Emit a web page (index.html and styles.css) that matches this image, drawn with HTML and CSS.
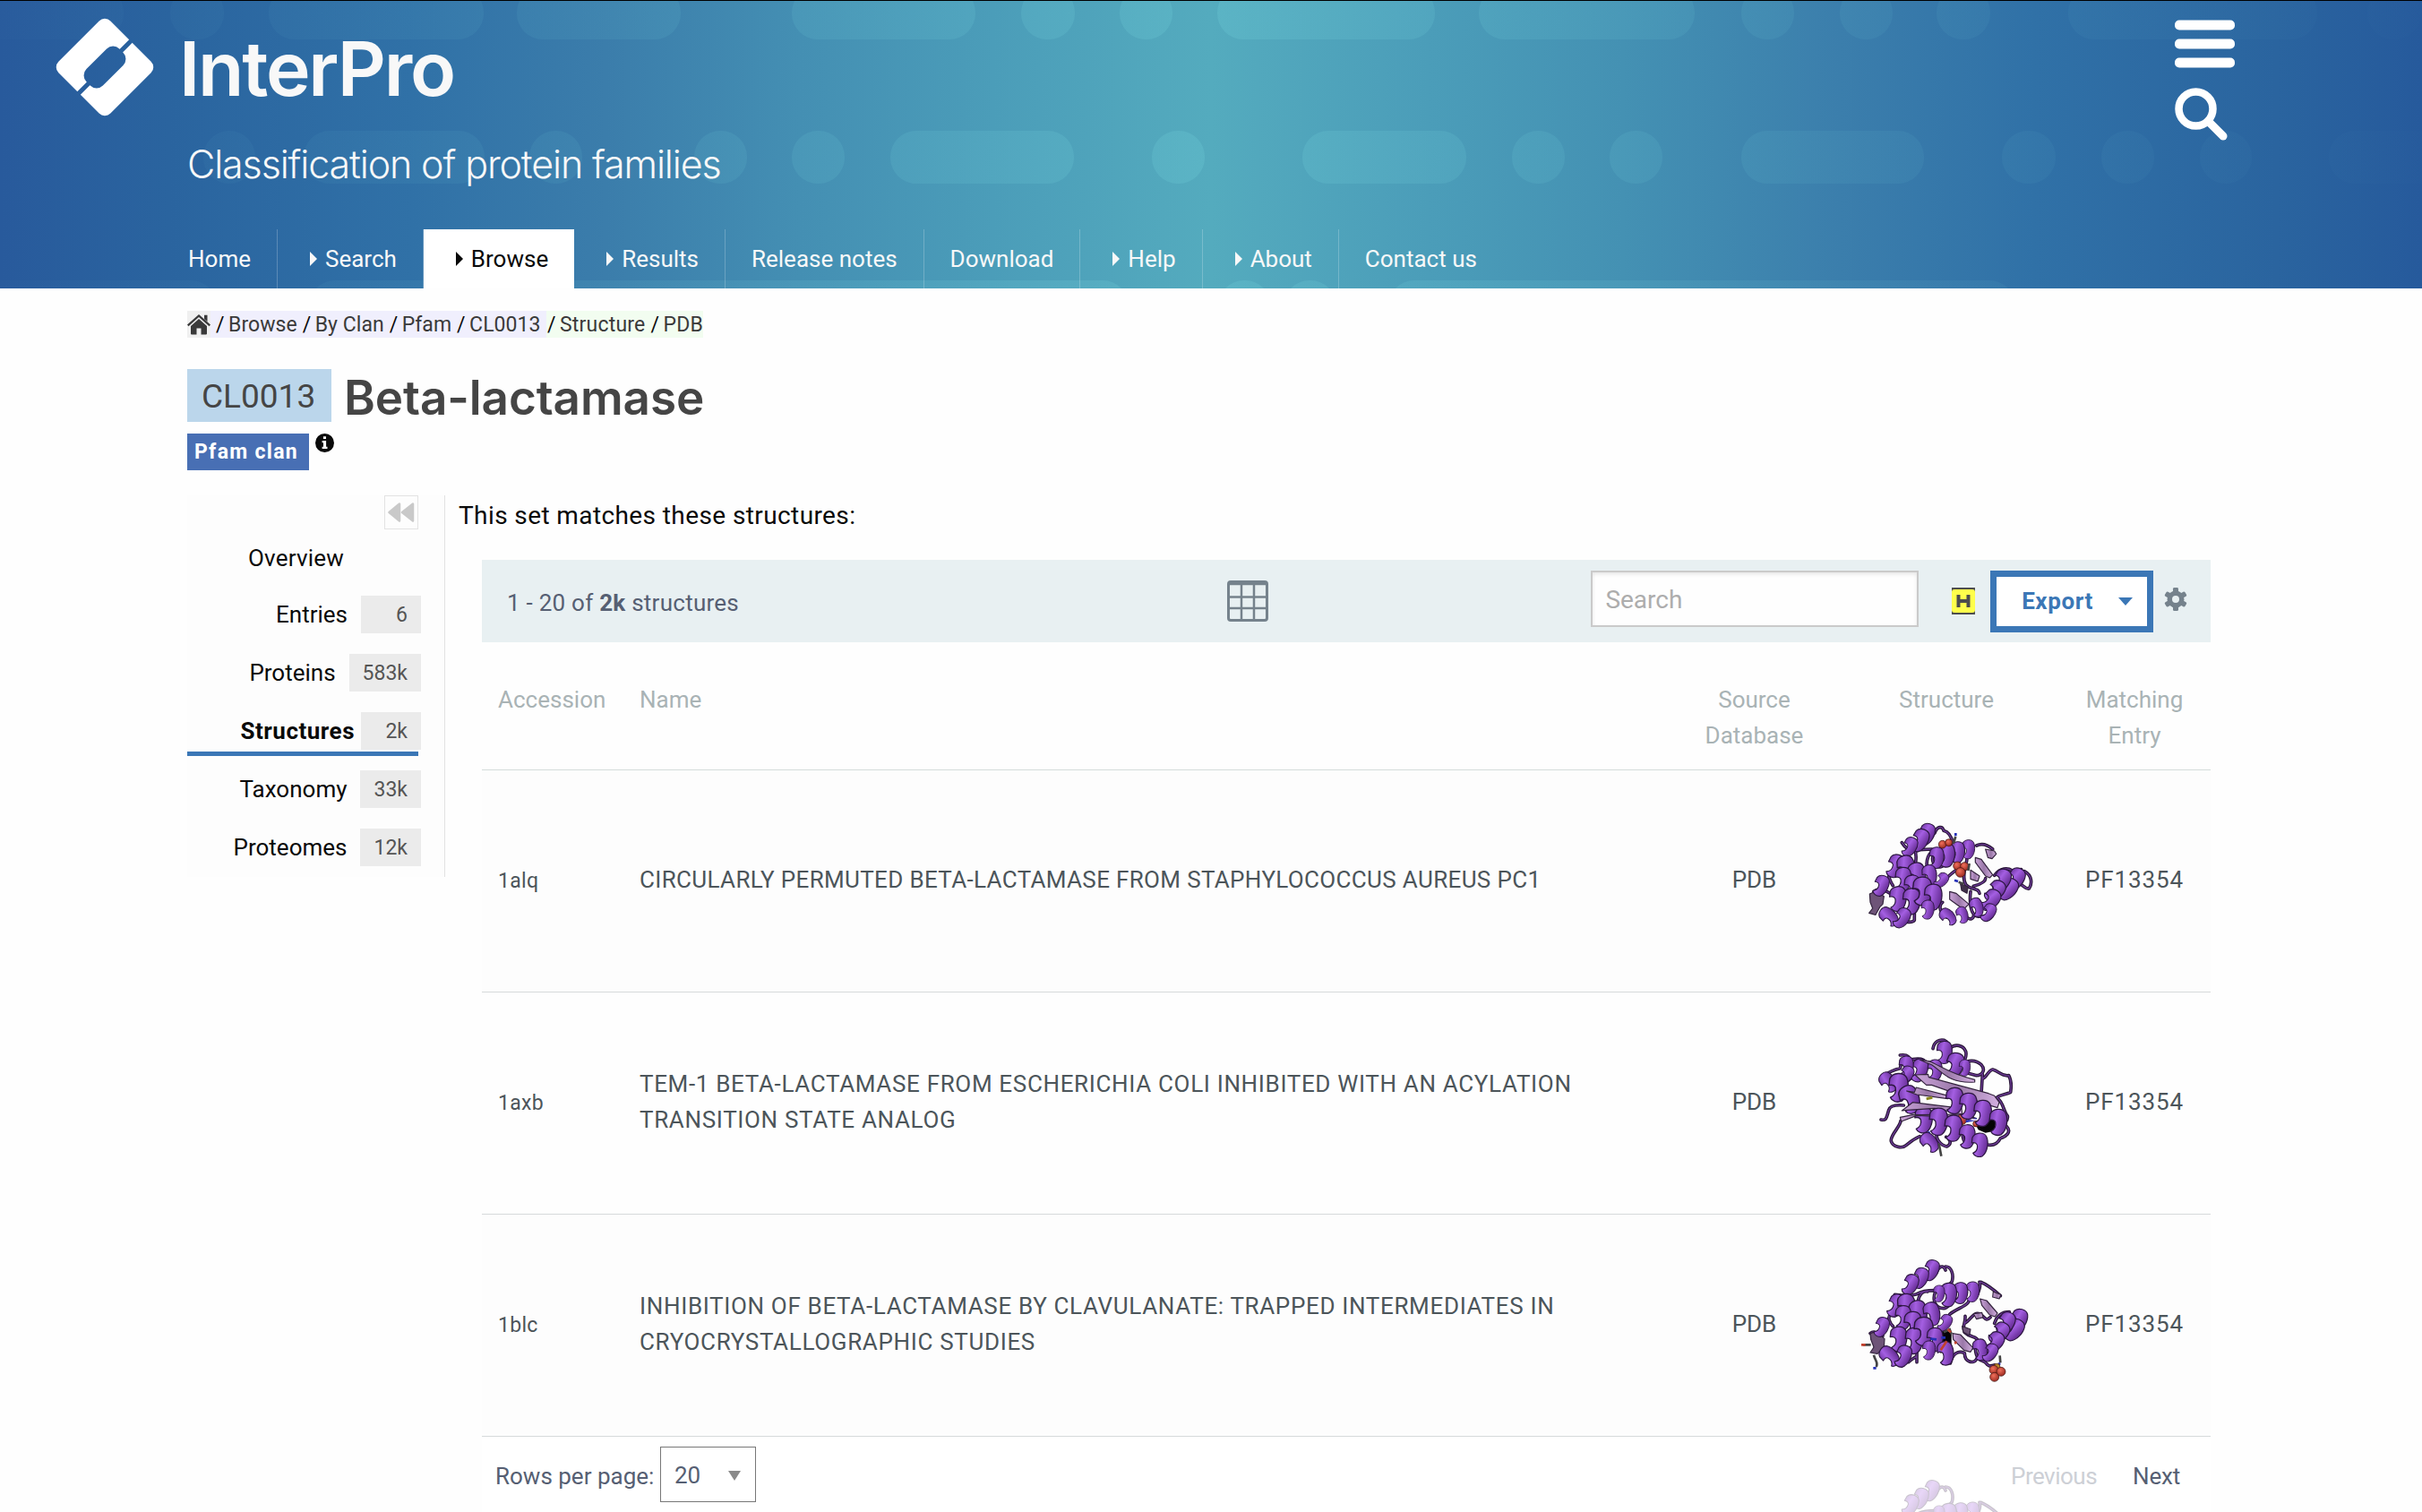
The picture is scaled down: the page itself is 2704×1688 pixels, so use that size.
FILE: index.html
```html
<!DOCTYPE html>
<html lang="en">
<head>
<meta charset="utf-8">
<title>Beta-lactamase (CL0013) - Structures - InterPro</title>
<link rel="stylesheet" href="styles.css">
</head>
<body>
<svg class="defs" width="0" height="0" aria-hidden="true">
  <defs>
    <linearGradient id="coil" x1="0" y1="0" x2="1" y2="0.3">
      <stop offset="0" stop-color="#6d35a0"/><stop offset=".45" stop-color="#a45fe2"/><stop offset="1" stop-color="#6a309a"/>
    </linearGradient>
    <radialGradient id="atom" cx=".4" cy=".35" r=".7">
      <stop offset="0" stop-color="#f0705c"/><stop offset="1" stop-color="#96261c"/>
    </radialGradient>
    <linearGradient id="sheet" x1="0" y1="0" x2="1" y2="0">
      <stop offset="0" stop-color="#c9a3d8"/><stop offset=".5" stop-color="#9a78a8"/><stop offset="1" stop-color="#d3b0e0"/>
    </linearGradient>
    <path id="turn" d="M-24-24C-16-42 14-44 23-28C32-8 27 24 10 38C-4 44-18 38-22 28C-8 22-6 10-8 0C-12-8-18-8-26-6Z"/>

    <g id="fold-a">
      <path id="a-loops" d="M300 208C308 184 326 184 330 200M330 200C346 204 356 222 360 240M232 262C240 276 238 290 236 306M190 240C206 266 226 272 250 264L290 262M276 330C268 300 280 270 300 268M300 270C284 296 296 322 318 322C336 320 330 300 350 300M340 358C360 340 380 322 400 316C412 308 404 290 412 276M400 330C398 350 394 366 404 380C420 400 448 390 450 410M430 386C450 380 470 372 470 360M152 340C140 350 150 368 160 384M162 286C180 286 190 290 204 292M96 404C110 390 140 402 150 410M232 474V500C224 510 210 506 200 504M326 440C310 452 320 480 340 490M420 404C416 440 420 480 440 486C462 492 486 480 494 466M410 492C420 500 430 494 430 484M500 350C520 324 544 324 560 334L590 330M600 336C628 350 626 380 616 394C604 396 596 384 586 378M440 250C460 240 480 250 494 262"/>
    </g>
  </defs>
</svg>

<header class="masthead">
  <svg class="bubbles" width="2704" height="321" viewBox="0 1 2704 321" aria-hidden="true">
    <defs>
      <linearGradient id="glow" gradientUnits="userSpaceOnUse" x1="0" y1="0" x2="2704" y2="0">
        <stop offset="0" stop-color="#5fa8c8" stop-opacity=".02"/>
        <stop offset=".25" stop-color="#60b8cc" stop-opacity=".14"/>
        <stop offset=".5" stop-color="#70cfd8" stop-opacity=".26"/>
        <stop offset=".75" stop-color="#60b8cc" stop-opacity=".13"/>
        <stop offset="1" stop-color="#5fa8c8" stop-opacity=".01"/>
      </linearGradient>
    </defs>
    <g fill="url(#glow)">
      <rect x="-60" y="-15" width="198" height="59" rx="29"/><rect x="190" y="-15" width="60" height="59" rx="29"/><rect x="300" y="-15" width="240" height="59" rx="29"/><rect x="577" y="-15" width="183" height="59" rx="29"/><rect x="884" y="-15" width="205" height="59" rx="29"/><rect x="1140" y="-15" width="60" height="59" rx="29"/><rect x="1250" y="-15" width="59" height="59" rx="29"/><rect x="1359" y="-15" width="243" height="59" rx="29"/><rect x="1651" y="-15" width="241" height="59" rx="29"/><rect x="1944" y="-15" width="59" height="59" rx="29"/><rect x="2054" y="-15" width="59" height="59" rx="29"/><rect x="2162" y="-15" width="60" height="59" rx="29"/><rect x="2309" y="-15" width="278" height="59" rx="29"/><rect x="2643" y="-15" width="60" height="59" rx="29"/>
      <rect x="227" y="146" width="58" height="59" rx="29"/><rect x="339" y="146" width="202" height="59" rx="29"/><rect x="591" y="146" width="59" height="59" rx="29"/><rect x="775" y="146" width="59" height="59" rx="29"/><rect x="884" y="146" width="59" height="59" rx="29"/><rect x="994" y="146" width="205" height="59" rx="29"/><rect x="1286" y="146" width="59" height="59" rx="29"/><rect x="1454" y="146" width="183" height="59" rx="29"/><rect x="1688" y="146" width="59" height="59" rx="29"/><rect x="1797" y="146" width="59" height="59" rx="29"/><rect x="1944" y="146" width="204" height="59" rx="29"/><rect x="2235" y="146" width="60" height="59" rx="29"/><rect x="2346" y="146" width="59" height="59" rx="29"/><rect x="2456" y="146" width="58" height="59" rx="29"/><rect x="2600" y="146" width="180" height="59" rx="29"/>
      <rect x="-40" y="313" width="282" height="59" rx="29"/><rect x="345" y="313" width="915" height="59" rx="29"/><rect x="1360" y="313" width="59" height="59" rx="29"/><rect x="1433" y="313" width="59" height="59" rx="29"/><rect x="1550" y="313" width="700" height="59" rx="29"/>
    </g>
  </svg>
  <div class="masthead-main">
    <div class="brand">
      <svg class="logo" width="110" height="110" viewBox="-55 -55 110 110">
        <defs><mask id="cut" maskUnits="userSpaceOnUse" x="-55" y="-55" width="110" height="110">
          <rect x="-55" y="-55" width="110" height="110" fill="#fff"/>
          <g transform="rotate(-45)" fill="#000">
            <rect x="-26" y="-13" width="52" height="26" rx="10"/>
            <rect x="-60" y="-2.5" width="120" height="5"/>
          </g>
        </mask></defs>
        <g mask="url(#cut)"><rect x="-41" y="-41" width="82" height="82" rx="9" transform="rotate(45)" fill="#fff"/></g>
      </svg>
      <span class="brand-name">InterPro</span>
    </div>
    <div class="tagline">Classification of protein families</div>
    <nav class="nav">
      <a>Home</a>
      <a><i class="caret"></i>Search</a>
      <a class="active"><i class="caret"></i>Browse</a>
      <a><i class="caret"></i>Results</a>
      <a>Release notes</a>
      <a>Download</a>
      <a><i class="caret"></i>Help</a>
      <a><i class="caret"></i>About</a>
      <a>Contact us</a>
    </nav>
  </div>
  <div class="tools">
    <svg width="67" height="54" viewBox="0 0 67 54" fill="#fff"><rect y=".5" width="67" height="11" rx="5"/><rect y="21.500" width="67" height="11" rx="5"/><rect y="42.500" width="67" height="11" rx="5"/></svg>
    <svg width="60" height="60" viewBox="0 0 60 60" fill="none" stroke="#fff"><circle cx="23.500" cy="23.500" r="19" stroke-width="8.500"/><path d="M38 38L54 54" stroke-width="9" stroke-linecap="round"/></svg>
  </div>
</header>

<main class="page">
  <nav class="crumbs">
    <span class="home"><svg width="26" height="23" viewBox="0 0 26 23" fill="#3a3a3a"><path d="M13 0L26 11.500L24.500 13.200L13 3L1.500 13.200L0 11.500L8.500 4ZM19 .8H22.500V8L19 5Z"/><path d="M13 5L22 13V21.500Q22 22.500 21 22.500H15.500V15.500H10.500V22.500H5Q4 22.500 4 21.500V13Z"/></svg></span>
    <span class="set"><b>/</b>Browse<b>/</b>By Clan<b>/</b>Pfam<b>/</b>CL0013</span>
    <span class="struct"><b>/</b>Structure<b>/</b>PDB</span>
  </nav>
  <div class="title">
    <span class="accession">CL0013</span>
    <h1>Beta-lactamase</h1>
  </div>
  <div class="tag-row">
    <span class="tag">Pfam clan</span>
    <svg width="21" height="21" viewBox="0 0 21 21"><circle cx="10.500" cy="10.500" r="10.500" fill="#0a0a0a"/><path d="M8.900 3.200H12V6.100H8.900ZM7.600 8H12.100V14.800H13.500V17H7.600V14.800H9V10.200H7.600Z" fill="#fff"/></svg>
  </div>

  <div class="content">
    <aside class="side">
      <div class="collapse"><svg width="30" height="22" viewBox="0 0 30 22" fill="#c9c9c9" stroke="#c9c9c9" stroke-width="2.500" stroke-linejoin="round"><path d="M13 1.500V20.500L1.500 11ZM28 1.500V20.500L16 11Z"/></svg></div>
      <a class="overview">Overview</a>
      <a>Entries<span>6</span></a>
      <a>Proteins<span>583k</span></a>
      <a class="current">Structures<span>2k</span></a>
      <a>Taxonomy<span>33k</span></a>
      <a>Proteomes<span>12k</span></a>
    </aside>

    <section class="results">
      <p class="lead">This set matches these structures:</p>
      <div class="table">
        <div class="toolbar">
          <div class="range">1 - 20 of <strong>2k</strong> structures</div>
          <svg class="grid-icon" width="46" height="46" viewBox="0 0 46 46"><rect x="1.500" y="1.500" width="43" height="43" rx="2.500" fill="#e8f0f2" stroke="#75828c" stroke-width="3"/><path d="M1 4H45M1 18.500H45M1 31H45M16 3V44M30 3V44" stroke="#75828c" stroke-width="2.500"/></svg>
          <div class="search">Search</div>
          <svg class="hmmer" width="26" height="30" viewBox="0 0 26 30"><rect width="26" height="30" fill="#4d4d4d"/><rect y="2" width="26" height="26" rx="3" fill="#ffff4c"/><path d="M7.500 8V22M18.500 8V22M7.500 15H18.500" stroke="#4d4d4d" stroke-width="4" fill="none"/></svg>
          <div class="export">Export<i></i></div>
          <svg class="gear" width="26" height="26" viewBox="-13 -13 26 26"><g fill="#75828c"><circle r="9.500"/><g id="tooth"><rect x="-3" y="-13" width="6" height="26" rx="1.500"/></g><use href="#tooth" transform="rotate(60)"/><use href="#tooth" transform="rotate(120)"/></g><circle r="4" fill="#e8f0f2"/></svg>
        </div>
        <div class="row head">
          <div>Accession</div><div>Name</div><div>Source<br>Database</div><div>Structure</div><div class="match">Matching<br>Entry</div>
        </div>
        <div class="row odd">
          <div class="acc">1alq</div>
          <div class="name tight">CIRCULARLY PERMUTED BETA-LACTAMASE FROM STAPHYLOCOCCUS AUREUS PC1</div>
          <div>PDB</div>
          <div class="thumb"><svg viewBox="15 40 648 648">
            <g class="loop"><use href="#a-loops" class="edge"/><use href="#a-loops" class="core"/></g>
            <g class="strand"><path d="M436 290L456 296L494 348L484 358L470 352L436 306Z"/><path d="M470 262L500 268L506 278L492 294L478 290Z"/><path d="M420 332L450 352L444 370L420 362Z"/><path d="M350 404L372 410L414 446L400 460L388 458L350 430Z"/><path d="M386 378L412 388L408 410L390 400Z" fill="#40304a"/><path d="M82 412L104 402L130 420L126 446L116 456L102 482L80 476L92 460L84 440Z" fill="#6e5478"/></g>
            <g class="turns">
              <use href="#turn" transform="translate(272 212) rotate(20) scale(.95)"/><use href="#turn" transform="translate(250 232) rotate(24) scale(1)"/><use href="#turn" transform="translate(216 254) rotate(24) scale(.85)"/>
              <use href="#turn" transform="translate(412 262) scale(.8)"/><use href="#turn" transform="translate(376 272) scale(.9)"/><use href="#turn" transform="translate(340 282) scale(1)"/><use href="#turn" transform="translate(306 290) scale(.9)"/>
              <use href="#turn" transform="translate(168 318) rotate(20)"/><use href="#turn" transform="translate(204 326) rotate(-10) scale(1.1)"/><use href="#turn" transform="translate(240 350) rotate(-10) scale(1.1)"/><use href="#turn" transform="translate(282 350) rotate(-8) scale(.9)"/><use href="#turn" transform="translate(322 366) rotate(40) scale(.7)"/>
              <use href="#turn" transform="translate(194 362)"/><use href="#turn" transform="translate(224 388)"/><use href="#turn" transform="translate(120 384) rotate(20) scale(.9)"/><use href="#turn" transform="translate(176 428) scale(1.05)"/><use href="#turn" transform="translate(222 436) scale(1.1)"/><use href="#turn" transform="translate(258 402) scale(1.2)"/><use href="#turn" transform="translate(294 422) scale(1.1)"/><use href="#turn" transform="translate(276 464) scale(.8)"/>
              <use href="#turn" transform="translate(146 488) rotate(-50) scale(.9)"/><use href="#turn" transform="translate(190 492) rotate(30) scale(.9)"/>
              <use href="#turn" transform="translate(344 488) rotate(-50) scale(.8)"/><use href="#turn" transform="translate(392 482) rotate(-20) scale(.7)"/>
              <use href="#turn" transform="translate(570 362) rotate(30)"/><use href="#turn" transform="translate(546 396) rotate(35)"/><use href="#turn" transform="translate(524 366) rotate(25)"/><use href="#turn" transform="translate(502 402) rotate(40)"/><use href="#turn" transform="translate(486 432) rotate(40)"/><use href="#turn" transform="translate(440 456) rotate(-20) scale(.8)"/><use href="#turn" transform="translate(480 474) rotate(30) scale(.8)"/>
            </g>
            <g class="atoms"><circle cx="326" cy="246" r="13"/><circle cx="347" cy="240" r="12"/><circle cx="376" cy="318" r="14"/><circle cx="400" cy="320" r="14"/><circle cx="386" cy="340" r="16"/></g>
            <path class="stick" d="M362 244L370 220"/><path class="blue" d="M370 218V208M366 366L378 370"/><path class="stick" d="M416 310L412 334M380 372L396 378"/>
          </svg></div>
          <div class="entry">PF13354</div>
        </div>
        <div class="row">
          <div class="acc">1axb</div>
          <div class="name">TEM-1 BETA-LACTAMASE FROM ESCHERICHIA COLI INHIBITED WITH AN ACYLATION<br>TRANSITION STATE ANALOG</div>
          <div>PDB</div>
          <div class="thumb"><svg viewBox="15 4 648 648">
            <g class="loop">
              <path id="b-loops" d="M294 150C298 126 316 118 332 122C350 130 350 150 346 166M350 150C368 132 396 138 404 160C410 184 392 192 396 210M392 204C410 188 436 186 456 204C472 222 458 240 440 240L410 232M460 236L456 300M462 250C474 246 478 224 494 220C516 226 524 244 548 240C560 262 556 280 554 296C540 304 520 304 508 314M510 316C530 330 530 360 544 376C546 388 540 392 536 396M540 410C560 430 536 446 520 450C510 470 496 476 476 472M196 340C172 338 150 340 146 356C138 380 140 392 120 388M186 392C186 410 150 440 154 460C160 480 190 486 204 474C220 460 236 450 250 444M130 240C150 226 166 220 184 216C190 200 180 186 208 190C230 184 250 182 262 188M184 172C210 168 220 180 214 200M308 430C300 450 320 474 340 478C360 470 350 450 338 446M190 270C206 262 214 254 226 244M280 196L300 220M380 420C400 430 390 450 400 462"/>
              <use href="#b-loops" class="edge"/><use href="#b-loops" class="core"/>
            </g>
            <g class="turns">
              <use href="#turn" transform="translate(332 162) scale(.95)"/><use href="#turn" transform="translate(366 206) rotate(15) scale(1.1)"/><use href="#turn" transform="translate(400 214) scale(.7)"/><use href="#turn" transform="translate(248 222) rotate(15)"/><use href="#turn" transform="translate(300 222) scale(.9)"/><use href="#turn" transform="translate(204 210) scale(.9)"/><use href="#turn" transform="translate(204 238) rotate(30) scale(.8)"/>
              <use href="#turn" transform="translate(144 262) rotate(-40) scale(.9)"/><use href="#turn" transform="translate(178 280) rotate(0) scale(1.2)"/><use href="#turn" transform="translate(216 320) rotate(-20) scale(1.2)"/><use href="#turn" transform="translate(262 388) scale(1.1)"/>
            </g>
            <path d="M436 404L470 380L506 394L498 426L470 432L446 422Z" fill="#050505"/>
            <g class="strand">
              <path d="M234 238L278 236L280 246L480 300L500 308L516 330L510 348L478 338L290 272L272 272Z"/><path d="M250 188C300 186 330 232 434 254V262C350 268 330 232 290 204Z"/><path d="M206 292L232 296L238 280L346 308L344 318L240 304Z"/><path d="M190 358L226 330L390 350L392 370L300 350L206 356Z"/><path d="M184 380L226 372L390 370L440 384L330 378L240 374L188 394Z"/>
            </g>
            <g class="atoms"><circle cx="390" cy="388" r="17"/><circle cx="438" cy="402" r="10"/><circle cx="522" cy="370" r="7"/></g>
            <path class="blue" d="M404 394L440 386M274 434L284 430"/><path d="M424 390V370M400 384L446 390" stroke="#eadcf2" stroke-width="5"/><path d="M272 318L292 314" stroke="#8a8520" stroke-width="9"/>
            <g class="turns">
              <use href="#turn" transform="translate(366 324) scale(1.1)"/><use href="#turn" transform="translate(412 342) scale(1.1)"/><use href="#turn" transform="translate(460 366) scale(1.1)"/><use href="#turn" transform="translate(512 396) scale(1.1)"/>
              <use href="#turn" transform="translate(312 394) scale(1.15)"/><use href="#turn" transform="translate(362 416) scale(1.1)"/><use href="#turn" transform="translate(408 444)"/><use href="#turn" transform="translate(450 472)"/><use href="#turn" transform="translate(282 464) rotate(-45) scale(.9)"/>
            </g>
            <path class="stick" d="M314 468L322 510"/>
          </svg></div>
          <div class="entry">PF13354</div>
        </div>
        <div class="row odd">
          <div class="acc">1blc</div>
          <div class="name">INHIBITION OF BETA-LACTAMASE BY CLAVULANATE: TRAPPED INTERMEDIATES IN<br>CRYOCRYSTALLOGRAPHIC STUDIES</div>
          <div>PDB</div>
          <div class="thumb"><svg viewBox="15 28 648 648"><g id="fold-c">
            <g class="loop">
              <path id="c-loops" d="M306 180C312 160 330 152 336 172M336 160C356 160 364 186 358 210C352 222 336 226 322 230M166 254C196 256 210 262 240 252C260 240 280 240 300 240M244 280C246 254 260 240 276 244M304 240C290 270 300 300 330 300C350 300 350 270 380 268M350 320C370 302 400 296 412 280C418 266 420 260 430 256M152 320C140 330 150 350 160 360M402 326C404 350 390 360 400 380C420 400 440 390 446 410M400 350C420 340 430 310 450 318C470 330 470 346 486 330M450 212C456 230 446 240 444 252M454 212C480 222 500 240 520 258M84 384C100 370 110 390 126 392M240 446V480M240 460C224 470 216 476 212 480M352 484C360 450 380 440 400 450C400 480 430 488 440 470M436 430C436 450 440 470 460 476C480 480 470 500 500 490M500 350C510 320 530 312 550 312"/>
              <use href="#c-loops" class="edge"/><use href="#c-loops" class="core"/>
            </g>
            <g class="strand"><path d="M452 268L474 274L510 316L502 328L484 322L458 290Z"/><path d="M496 244L522 254L516 268L494 262Z"/><path d="M360 384L386 388L428 432L420 446L398 440L362 404Z"/><path d="M392 360L420 370L416 390L396 380Z" fill="#6e5478"/><path d="M430 318L458 314L462 330L440 336Z"/><path d="M84 384L102 378L132 402L130 430L108 452L84 448L96 430L86 404Z" fill="#6e5478"/></g>
            <path d="M290 388L330 366L356 384V430L320 450L294 420Z" fill="#060309"/>
            <g class="turns">
              <use href="#turn" transform="translate(288 172) rotate(20) scale(.9)"/><use href="#turn" transform="translate(252 198) rotate(20) scale(.9)"/><use href="#turn" transform="translate(218 220) rotate(24) scale(.9)"/>
              <use href="#turn" transform="translate(426 244) scale(.85)"/><use href="#turn" transform="translate(386 248) scale(.9)"/><use href="#turn" transform="translate(346 254) scale(1)"/><use href="#turn" transform="translate(314 250) scale(.7)"/>
              <use href="#turn" transform="translate(170 290) rotate(20)"/><use href="#turn" transform="translate(206 294) rotate(-10) scale(1.1)"/><use href="#turn" transform="translate(244 316) rotate(-10) scale(1.1)"/><use href="#turn" transform="translate(290 318) rotate(-14) scale(1)"/><use href="#turn" transform="translate(334 348) rotate(30) scale(.75)"/>
              <use href="#turn" transform="translate(194 330)"/><use href="#turn" transform="translate(226 354) scale(1.1)"/><use href="#turn" transform="translate(122 362) rotate(20) scale(.85)"/><use href="#turn" transform="translate(178 402) scale(1.05)"/><use href="#turn" transform="translate(230 408) scale(1.1)"/><use href="#turn" transform="translate(262 376) scale(1.2)"/><use href="#turn" transform="translate(300 404) scale(1)"/><use href="#turn" transform="translate(280 440) scale(.8)"/><use href="#turn" transform="translate(336 450) rotate(-10) scale(1)"/>
              <use href="#turn" transform="translate(148 460) rotate(-50) scale(.95)"/><use href="#turn" transform="translate(194 460) rotate(20) scale(.95)"/>
              <use href="#turn" transform="translate(580 340) rotate(20)"/><use href="#turn" transform="translate(566 372) rotate(35)"/><use href="#turn" transform="translate(538 350) rotate(25)"/><use href="#turn" transform="translate(516 382) rotate(40)"/><use href="#turn" transform="translate(498 414) rotate(40)"/><use href="#turn" transform="translate(452 438) rotate(-10) scale(.9)"/><use href="#turn" transform="translate(486 448) rotate(30) scale(.8)"/>
            </g>
            <path class="stick" d="M60 422L86 422M96 456C100 476 112 480 104 496M330 380L350 370L356 386M518 458L520 482"/><path class="blue" d="M94 500H104M286 402L306 404M322 398H336M516 482V490"/><path class="red" d="M54 422H68M344 370L354 380M366 416L374 414M320 440L340 410"/>
            <g class="atoms"><circle cx="508" cy="496" r="11" style="fill:#b8862a"/><circle cx="498" cy="506" r="15"/><circle cx="522" cy="512" r="15"/><circle cx="500" cy="530" r="15"/></g>
          </g></svg></div>
          <div class="entry">PF13354</div>
        </div>
        <div class="row partial">
          <div></div><div></div><div></div>
          <div class="thumb"><svg viewBox="15 31 648 213"><use href="#fold-c"/></svg></div>
          <div></div>
        </div>
      </div>
    </section>
  </div>
</main>

<footer class="pager">
  <label>Rows per page:</label>
  <div class="select">20<i></i></div>
  <span class="prev">Previous</span>
  <span class="next">Next</span>
</footer>
</body>
</html>
```
FILE: styles.css
```css
* { box-sizing: border-box; }
body {
  margin: 0;
  height: 1688px;
  overflow: hidden;
  position: relative;
  background: #fefefe;
  color: #0a0a0a;
  font: 26px/40px Roboto, "Liberation Sans", sans-serif;
}
.defs { position: absolute; }

/* Masthead */
.masthead {
  position: relative;
  display: flex;
  height: 322px;
  border-top: 1px solid #000;
  background: linear-gradient(90deg, #285a9c 0, #2a649f 7%, #3071a7 17%, #3b7dab 25%, #448fb3 33%, #4b9db9 41%, #54abbe 50%, #4b9db9 59%, #4491b3 67%, #3b7eac 76%, #3071a7 84%, #2a649f 94%, #265a9c 100%);
  color: #f8f8f8;
}
.bubbles { position: absolute; left: 0; top: 0; }
.masthead-main { position: relative; display: flex; flex-direction: column; width: 2428px; }
.brand { display: flex; align-items: center; height: 153px; padding-left: 62px; }
.logo { margin-bottom: 6px; }
.brand-name { margin: 0 0 2px 28px; font: 600 84px/100px Inter, sans-serif; letter-spacing: -2.2px; }
.tagline { height: 60px; padding-left: 209px; font: 300 43px/58px Inter, sans-serif; letter-spacing: -1.13px; }
.nav { display: flex; margin-top: auto; height: 66px; padding-left: 181px; line-height: 66px; }
.nav a { display: flex; align-items: center; padding: 0 29px; border-right: 1px solid rgba(255, 255, 255, .22); white-space: nowrap; }
.nav a:last-child { border: 0; }
.nav a.active { padding-right: 28px; background: #fff; color: #0a0a0a; }
.caret { margin: 0 9px 0 7px; border: 8px solid transparent; border-left: 8px solid; border-right: 0; }
.tools { position: relative; display: flex; flex-direction: column; gap: 22px; padding-top: 21px; }

/* Page title */
.page { padding: 25px 0 0 209px; }
.crumbs { display: flex; height: 30px; font-size: 23px; line-height: 32px; color: #3a3a3a; white-space: nowrap; }
.crumbs b { margin: 0 7px 0 1px; font-weight: 400; color: #0a0a0a; display: inline-block; width: 7px; }
.crumbs .home { display: flex; align-items: center; width: 26px; background: #f0f0f0; }
.crumbs .set { width: 375px; padding-left: 5px; background: #f0effd; letter-spacing: .05px; }
.crumbs .set b:not(:first-child), .crumbs .struct b:not(:first-child) { margin-left: 6px; }
.crumbs .struct { width: 175px; background: #f2fdf0; letter-spacing: .2px; }
.title { display: flex; align-items: center; height: 59px; margin-top: 35px; }
.accession { width: 161px; height: 59px; padding-left: 16px; background: #bbd6eb; color: #454545; font-size: 37px; line-height: 62px; }
h1 { margin: 5px 0 0 14px; color: #454545; font: 600 53px/57px Inter, sans-serif; letter-spacing: -.1px; }
.tag-row { display: flex; gap: 7px; margin-top: 13px; height: 41px; }
.tag { width: 136px; padding-left: 8px; background: #486fb4; color: #fff; font-size: 23px; font-weight: 700; line-height: 42px; letter-spacing: 1.3px; white-space: nowrap; }

/* Side menu */
.content { display: grid; grid-template-columns: 288px 1fr; margin-top: 28px; }
.side { display: flex; flex-direction: column; height: 426px; border-right: 1px solid #e2e2e2; background: #fdfdfd; }
.collapse { display: flex; align-items: center; justify-content: center; align-self: flex-end; width: 38px; height: 38px; margin-right: 29px; border: 1px solid #e3e3e3; }
.side a { position: relative; display: flex; align-items: center; justify-content: flex-end; height: 65px; padding-right: 26px; }
.side .overview { height: 62px; padding: 2px 112px 0 0; letter-spacing: .2px; }
.side a span { min-width: 67px; height: 42px; margin-left: 15px; padding: 0 15px; background: #ebebeb; color: #555; font-size: 23px; line-height: 43px; text-align: right; }
.side .current { font-weight: 700; letter-spacing: .5px; }
.side .current span { margin-left: 7px; font-weight: 400; letter-spacing: 0; }
.side .current::after { content: ""; position: absolute; left: 0; right: 29px; bottom: 4px; height: 5px; background: #3b77b6; }

/* Results table */
.results { padding-left: 15px; }
.lead { margin: 0; height: 72px; font-size: 28px; line-height: 45px; letter-spacing: .4px; }
.table { width: 1930px; margin-left: 26px; }
.toolbar { display: flex; align-items: center; height: 92px; padding: 0 26px 0 28px; background: #e8f0f2; color: #565f73; }
.range { width: 805px; padding-top: 3px; letter-spacing: .25px; }
.search { width: 366px; height: 63px; margin: 0 37px 6px 360px; padding-left: 14px; border: 2px solid #cacaca; background: #fefefe; box-shadow: inset 0 2px 4px rgba(10, 10, 10, .1); color: #adadad; font-size: 28px; line-height: 62px; }
.export { display: flex; align-items: center; width: 182px; height: 69px; margin: 0 12px 0 17px; padding-left: 28px; border: 7px solid #3b77b6; background: #fff; color: #3b77b6; font-weight: 700; letter-spacing: .6px; }
.export i { margin-left: 28px; border: 8px solid transparent; border-top: 9px solid; border-bottom: 0; }
.gear { margin-bottom: 4px; }
.row { display: grid; grid-template-columns: 166px 1168px 173px 256px 167px; align-items: center; height: 248px; padding-bottom: 3px; border-bottom: 1px solid #d6dadb; color: #4c555a; text-align: center; }
.row.odd { background: #fdfdfd; }
.row > :nth-child(1) { padding-left: 18px; text-align: left; }
.row > :nth-child(2) { padding-left: 10px; text-align: left; white-space: nowrap; }
.row.head { align-items: start; height: 143px; padding: 44px 0 0; border-color: #d4dcdb; color: #a9b3b5; }
.row.partial { align-items: start; height: 84px; padding: 13px 0 0; border: 0; }
.match { padding-right: 3px; }
.acc { padding-top: 3px; font-size: 23px; letter-spacing: .3px; }
.name { letter-spacing: .66px; }
.name.tight { letter-spacing: .34px; }
.entry { padding-right: 3px; letter-spacing: .9px; }
.thumb svg { display: block; width: 216px; margin: 0 auto; }

/* Protein drawings */
.loop path, .loop use { fill: none; stroke-linecap: round; stroke-linejoin: round; }
.edge { stroke: #2a1738; stroke-width: 11; }
.core { stroke: #6c3a96; stroke-width: 4; }
.turns { fill: url(#coil); stroke: #2c1640; stroke-width: 3.5; stroke-linejoin: round; }
.strand { fill: url(#sheet); stroke: #33233d; stroke-width: 3.5; stroke-linejoin: round; }
.atoms { fill: url(#atom); stroke: #3a0f0c; stroke-width: 2; }
.stick, .blue, .red { fill: none; stroke: #444; stroke-width: 8; }
.blue { stroke: #2530b8; }
.red { stroke: #c2402c; }

/* Pager pinned over the end of the table */
.pager { position: absolute; left: 538px; bottom: 0; display: flex; align-items: center; width: 1930px; height: 84px; padding-left: 15px; background: rgba(255, 255, 255, .75); color: #565f73; }
.pager label { width: 184px; padding-top: 4px; }
.select { display: flex; align-items: center; width: 107px; height: 62px; padding: 2px 0 0 15px; border: 1px solid #777; background: #fff; }
.select i { margin-left: 31px; border: 7px solid transparent; border-top: 11px solid #8a8a8a; border-bottom: 0; }
.prev { margin-left: 1401px; padding-top: 3px; color: #cdd0d6; letter-spacing: -.5px; }
.next { margin-left: 40px; padding-top: 3px; letter-spacing: -.2px; }
```
